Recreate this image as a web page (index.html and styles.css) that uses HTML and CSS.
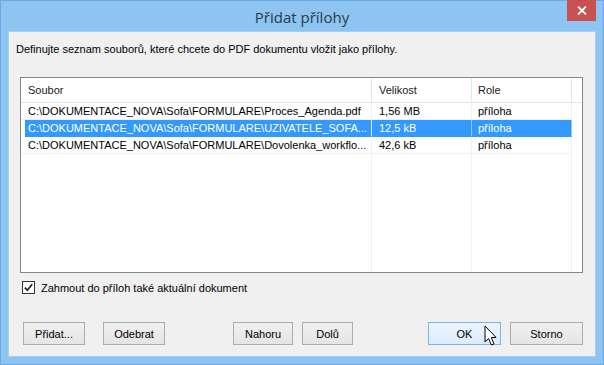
FILE: index.html
```html
<!DOCTYPE html>
<html lang="cs">
<head>
<meta charset="utf-8">
<title>Přidat přílohy</title>
<link rel="stylesheet" href="styles.css">
</head>
<body>
<div class="window">
  <div class="titlebar">
    <span class="title">Přidat přílohy</span>
    <div class="close"><svg width="10" height="9" viewBox="0 0 10 9"><path d="M1 0.5 L9 8.5 M9 0.5 L1 8.5" stroke="#fff" stroke-width="1.8"/></svg></div>
  </div>
  <div class="client">
    <p class="desc">Definujte seznam souborů, které chcete do PDF dokumentu vložit jako přílohy.</p>
    <div class="listbox">
      <div class="row header">
        <div class="cell c1">Soubor</div>
        <div class="cell c2">Velikost</div>
        <div class="cell c3">Role</div>
        <div class="cell c4"></div>
      </div>
      <div class="row item">
        <div class="cell c1">C:\DOKUMENTACE_NOVA\Sofa\FORMULARE\Proces_Agenda.pdf</div>
        <div class="cell c2">1,56 MB</div>
        <div class="cell c3">příloha</div>
        <div class="cell c4"></div>
      </div>
      <div class="row item selected">
        <div class="cell c1">C:\DOKUMENTACE_NOVA\Sofa\FORMULARE\UZIVATELE_SOFA...</div>
        <div class="cell c2">12,5 kB</div>
        <div class="cell c3">příloha</div>
        <div class="cell c4"></div>
      </div>
      <div class="row item">
        <div class="cell c1">C:\DOKUMENTACE_NOVA\Sofa\FORMULARE\Dovolenka_workflo...</div>
        <div class="cell c2">42,6 kB</div>
        <div class="cell c3">příloha</div>
        <div class="cell c4"></div>
      </div>
      <div class="row filler">
        <div class="cell c1"></div>
        <div class="cell c2"></div>
        <div class="cell c3"></div>
        <div class="cell c4"></div>
      </div>
    </div>
    <label class="check">
      <span class="box"><svg width="9" height="9" viewBox="0 0 9 9"><path d="M0.8 4.6 L3.3 7.2 L8.2 1.3" fill="none" stroke="#222" stroke-width="1.7"/></svg></span>
      <span>Zahmout do příloh také aktuální dokument</span>
    </label>
    <div class="buttons">
      <div class="group">
        <button class="btn w62">Přidat...</button>
        <button class="btn w62">Odebrat</button>
      </div>
      <div class="group mid">
        <button class="btn w60">Nahoru</button>
        <button class="btn w51">Dolů</button>
      </div>
      <div class="group right">
        <button class="btn w73 default">OK</button>
        <button class="btn w73">Storno</button>
      </div>
      <svg class="cursor" width="14" height="22" viewBox="0 0 14 22"><path d="M1 1 L1 17 L4.6 13.6 L7.4 20 L10 18.9 L7.3 12.6 L12 12.4 Z" fill="#fff" stroke="#000" stroke-width="1" stroke-linejoin="round"/></svg>
    </div>
  </div>
</div>
</body>
</html>
```
FILE: styles.css
```css
* { box-sizing: border-box; }
html, body { margin: 0; padding: 0; }
body {
  width: 604px;
  height: 365px;
  overflow: hidden;
  font-family: "Liberation Sans", Arial, sans-serif;
  font-size: 11px;
  color: #000;
}
.window {
  width: 604px;
  height: 365px;
  background: #8dc4f2;
  border: 1px solid #6aa9e3;
  display: flex;
  flex-direction: column;
}
.titlebar {
  height: 30px;
  position: relative;
  display: flex;
  align-items: center;
  justify-content: center;
}
.title {
  font-family: "Open Sans", "Liberation Sans", sans-serif;
  font-size: 15px;
  color: #2b3a4a;
  margin-top: 1px;
}
.close {
  position: absolute;
  right: 7px;
  top: -1px;
  width: 29px;
  height: 21px;
  background: #c75050;
  display: flex;
  align-items: center;
  justify-content: center;
}
.client {
  margin: 0 7px 7px 7px;
  flex: 1;
  background: #f0f0f0;
  border: 1px solid #a9cdee;
  padding: 10px 12px 0 11px;
  display: flex;
  flex-direction: column;
}
.desc {
  margin: 0 0 0 -4px;
  height: 15px;
  line-height: 15px;
  color: #000;
}
.listbox {
  margin-top: 20px;
  width: 563px;
  height: 196px;
  background: #fff;
  border: 1px solid #828790;
  display: flex;
  flex-direction: column;
}
.row {
  display: flex;
  height: 17px;
  line-height: 16px;
}
.cell {
  padding-left: 7px;
  white-space: nowrap;
  overflow: hidden;
  border-right: 1px solid #f0f0f0;
  border-bottom: 1px solid #f0f0f0;
}
.c1 { width: 351px; }
.c2 { width: 100px; }
.c3 { width: 100px; padding-left: 6px; }
.c4 { width: 10px; }
.header { height: 25px; }
.header .cell {
  line-height: 24px;
  border-right-color: #e5e5e5;
  border-bottom-color: #e5e5e5;
  color: #1a1a1a;
}
.header .c4 { border-right: none; }
.item .c4, .filler .c4 { border-right: none; border-bottom: none; }
.selected .c1, .selected .c2, .selected .c3 {
  background: #3399ff;
  color: #fff;
  border-bottom-color: #3399ff;
}
.selected .c1 {
  margin-left: 4px;
  padding-left: 3px;
  width: 347px;
}
.selected .c2, .selected .c3 { border-right-color: #8ec4ff; }
.filler { flex: 1; }
.filler .cell { border-bottom: none; }
.check {
  margin-top: 8px;
  display: flex;
  align-items: center;
  height: 13px;
  margin-left: 2px;
}
.box {
  width: 13px;
  height: 13px;
  border: 1px solid #333;
  background: #fff;
  display: flex;
  align-items: center;
  justify-content: center;
  margin-right: 6px;
}
.buttons {
  margin-top: 28px;
  display: flex;
  align-items: center;
  position: relative;
  padding-left: 3px;
}
.group { display: flex; gap: 18px; }
.group.mid { margin-left: 68px; gap: 9px; }
.group.right { margin-left: auto; gap: 9px; }
.btn {
  height: 23px;
  font-family: "Liberation Sans", Arial, sans-serif;
  font-size: 11px;
  color: #000;
  background: linear-gradient(#f0f0f0, #e5e5e5);
  border: 1px solid #acacac;
  padding: 0;
}
.btn.default {
  background: linear-gradient(#ecf4fc, #dcecfc);
  border-color: #7eb4ea;
}
.w62 { width: 62px; }
.w60 { width: 60px; }
.w51 { width: 51px; }
.w73 { width: 73px; }
.cursor {
  position: absolute;
  left: 464px;
  top: 3px;
}
```
